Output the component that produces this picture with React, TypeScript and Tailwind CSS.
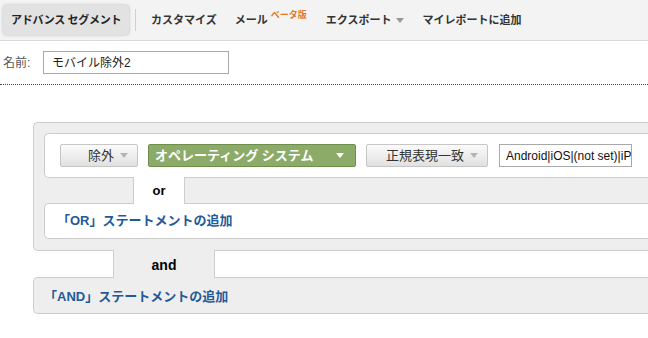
const JP = '"Liberation Sans", "Noto Sans CJK JP", sans-serif';

function Caret({ className }: { className: string }) {
  return (
    <svg width="8" height="5" viewBox="0 0 8 5" className={className}>
      <path d="M0 0 L8 0 L4 5 Z" fill="currentColor" />
    </svg>
  );
}

function GrayButton({ label, width }: { label: string; width: string }) {
  return (
    <div
      className={`flex h-[23px] items-center justify-end gap-[6px] rounded-[2px] border border-[#c6c6c6] bg-gradient-to-b from-[#fbfbfb] to-[#e1e1e1] pr-[9px] text-[13px] text-[#333] ${width}`}
    >
      <span>{label}</span>
      <Caret className="text-[#b5b5b5]" />
    </div>
  );
}

export default function App() {
  return (
    <div className="h-[338px] w-[648px] overflow-hidden bg-white" style={{ fontFamily: JP }}>
      {/* ツールバー */}
      <div className="flex h-[41px] items-center border-b border-[#dadada] bg-[#f3f3f3] pl-[3px] text-[11px] font-bold text-[#333]">
        <div className="flex h-[30px] items-center rounded-[4px] bg-[#e2e2e2] px-[8px] tracking-[-0.3px] text-[#222] shadow-[0_0_3px_rgba(0,0,0,0.25)]">
          アドバンス セグメント
        </div>
        <div className="ml-[6px] h-[22px] w-px bg-[#d0d0d0]" />
        <span className="ml-[15px]">カスタマイズ</span>
        <span className="ml-[18px]">メール</span>
        <span className="ml-[3px] -mt-[9px] text-[9px] text-[#e2762c]">ベータ版</span>
        <span className="ml-[19px]">エクスポート</span>
        <Caret className="ml-[5px] text-[#999]" />
        <span className="ml-[18px]">マイレポートに追加</span>
      </div>

      {/* 名前 */}
      <div className="flex h-[43px] items-center pl-[3px] text-[12px] text-[#555]">
        <span className="w-[40px]">名前:</span>
        <div className="flex h-[23px] w-[186px] items-center border border-[#a9a9a9] bg-white pl-[8px] text-[12px] text-[#222]">
          モバイル除外2
        </div>
      </div>
      <div className="border-t border-dotted border-[#444]" />

      {/* 条件 */}
      <div className="ml-[33px] mt-[37px] w-[700px]">
        <div className="rounded-l-[5px] border border-r-0 border-[#cccccc] bg-[#eeeeee] pb-[11px] pl-[10px] pt-[10px]">
          <div className="flex h-[45px] items-center gap-[10px] rounded-l-[5px] border border-r-0 border-[#cccccc] bg-white pl-[15px]">
            <GrayButton label="除外" width="w-[78px]" />
            <div className="flex h-[23px] w-[208px] items-center justify-between rounded-[2px] border border-[#6f8d4b] bg-[#8dab68] pl-[6px] pr-[11px] text-[13px] font-bold text-white">
              <span>オペレーティング システム</span>
              <Caret className="text-white" />
            </div>
            <GrayButton label="正規表現一致" width="w-[122px]" />
            <div className="ml-px flex h-[23px] w-[133px] items-center overflow-hidden whitespace-nowrap border border-[#a9a9a9] bg-white pl-[6px] text-[12px] text-[#111]">
              Android|iOS|(not set)|iP
            </div>
          </div>
          <div className="flex h-[25px]">
            <div className="w-[89px]" />
            <div className="relative z-10 -my-px flex h-[27px] w-[52px] items-center justify-center border-x border-[#cccccc] bg-white text-[13px] font-bold text-black">
              or
            </div>
          </div>
          <div className="flex h-[36px] items-center rounded-l-[5px] border border-r-0 border-[#cccccc] bg-white pl-[12px] text-[13px] font-bold text-[#1f5a9a]">
            「OR」ステートメントの追加
          </div>
        </div>
        <div className="flex h-[26px]">
          <div className="w-[80px]" />
          <div className="relative z-10 -my-px flex h-[28px] w-[102px] items-center justify-center border-x border-[#cccccc] bg-[#eeeeee] pt-[2px] text-[14px] font-bold text-black">
            and
          </div>
        </div>
        <div className="flex h-[37px] items-center rounded-l-[5px] border border-r-0 border-[#cccccc] bg-[#eeeeee] pl-[10px] pt-[2px] text-[13px] font-bold text-[#1f5a9a]">
          「AND」ステートメントの追加
        </div>
      </div>
    </div>
  );
}
